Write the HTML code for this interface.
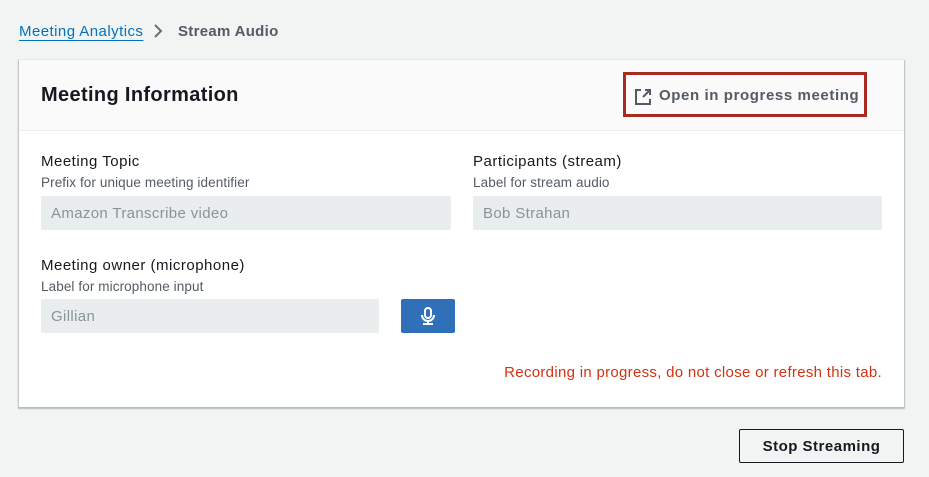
<!DOCTYPE html>
<html><head><meta charset="utf-8"><style>
*{box-sizing:border-box;margin:0;padding:0}
body{width:929px;height:477px;background:#f2f3f3;font-family:"Liberation Sans",sans-serif;position:relative;overflow:hidden;color:#16191f}
.abs{position:absolute;white-space:nowrap}
.crumb{left:19px;top:23px;font-size:15px;color:#0073bb;text-decoration:underline;text-underline-offset:4px;letter-spacing:.45px}
.chev{left:152px;top:22px}
.cur{left:178px;top:23px;font-size:15px;font-weight:bold;color:#545b64;letter-spacing:.3px}
.card{position:absolute;left:19px;top:60px;width:885px;height:347px;background:#fff;box-shadow:0 1px 1px 1px rgba(0,28,36,.25)}
.head{position:absolute;left:0;top:0;width:885px;height:71px;background:#fafafa;border-bottom:1px solid #eaeded}
.h2{left:22px;top:24px;font-size:20px;font-weight:bold;letter-spacing:.35px}
.red{position:absolute;left:604px;top:12px;width:244px;height:45px;border:3px solid #a82a20}
.link{left:33px;top:12px;font-size:15px;font-weight:bold;color:#545b64;letter-spacing:.6px}
.lab{font-size:15px;color:#16191f;letter-spacing:.5px}
.desc{font-size:13.5px;color:#545b64;letter-spacing:.1px}
.inp{position:absolute;height:34px;background:#eaeded;border-radius:2px;color:#879596;font-size:15px;padding:9px 10px;letter-spacing:.35px}
.red-t{font-size:15px;color:#d13212;letter-spacing:.3px}
.btn{position:absolute;left:739px;top:429px;width:165px;height:34px;border:1px solid #16191f;border-radius:2px;background:#f2f3f3;font-weight:bold;font-size:15px;text-align:center;line-height:33px;color:#16191f;letter-spacing:.5px}
</style></head><body>
<div class="abs crumb">Meeting Analytics</div>
<svg class="abs chev" width="12" height="18" viewBox="0 0 12 18"><path d="M3 3l6 6-6 6" fill="none" stroke="#687078" stroke-width="2"/></svg>
<div class="abs cur">Stream Audio</div>
<div class="card">
 <div class="head">
  <div class="abs h2">Meeting Information</div>
  <div class="red">
   <svg class="abs" style="left:8px;top:13px" width="18" height="18" viewBox="0 0 18 18"><path d="M7 2H2v14h14v-5" fill="none" stroke="#545b64" stroke-width="2"/><path d="M9 9l7-7M11 2h5v5" fill="none" stroke="#545b64" stroke-width="2"/></svg>
   <div class="abs link">Open in progress meeting</div>
  </div>
 </div>
 <div class="abs lab" style="left:22px;top:93px">Meeting Topic</div>
 <div class="abs desc" style="left:22px;top:115px">Prefix for unique meeting identifier</div>
 <div class="inp" style="left:22px;top:136px;width:410px">Amazon Transcribe video</div>
 <div class="abs lab" style="left:454px;top:93px">Participants (stream)</div>
 <div class="abs desc" style="left:454px;top:115px">Label for stream audio</div>
 <div class="inp" style="left:454px;top:136px;width:409px">Bob Strahan</div>
 <div class="abs lab" style="left:22px;top:197px">Meeting owner (microphone)</div>
 <div class="abs desc" style="left:22px;top:219px">Label for microphone input</div>
 <div class="inp" style="left:22px;top:239px;width:338px">Gillian</div>
 <div style="position:absolute;left:382px;top:239px;width:54px;height:34px;background:#3070b8;border-radius:2px">
  <svg class="abs" style="left:18px;top:8px" width="18" height="19" viewBox="0 0 18 19"><rect x="6" y="1" width="6" height="10" rx="3" fill="none" stroke="#fff" stroke-width="2"/><path d="M3 8a6 6 0 0 0 12 0M9 14v3M4 17h10" fill="none" stroke="#fff" stroke-width="2"/></svg>
 </div>
 <div class="abs red-t" style="right:22px;top:304px">Recording in progress, do not close or refresh this tab.</div>
</div>
<div class="btn">Stop Streaming</div>
</body></html>
